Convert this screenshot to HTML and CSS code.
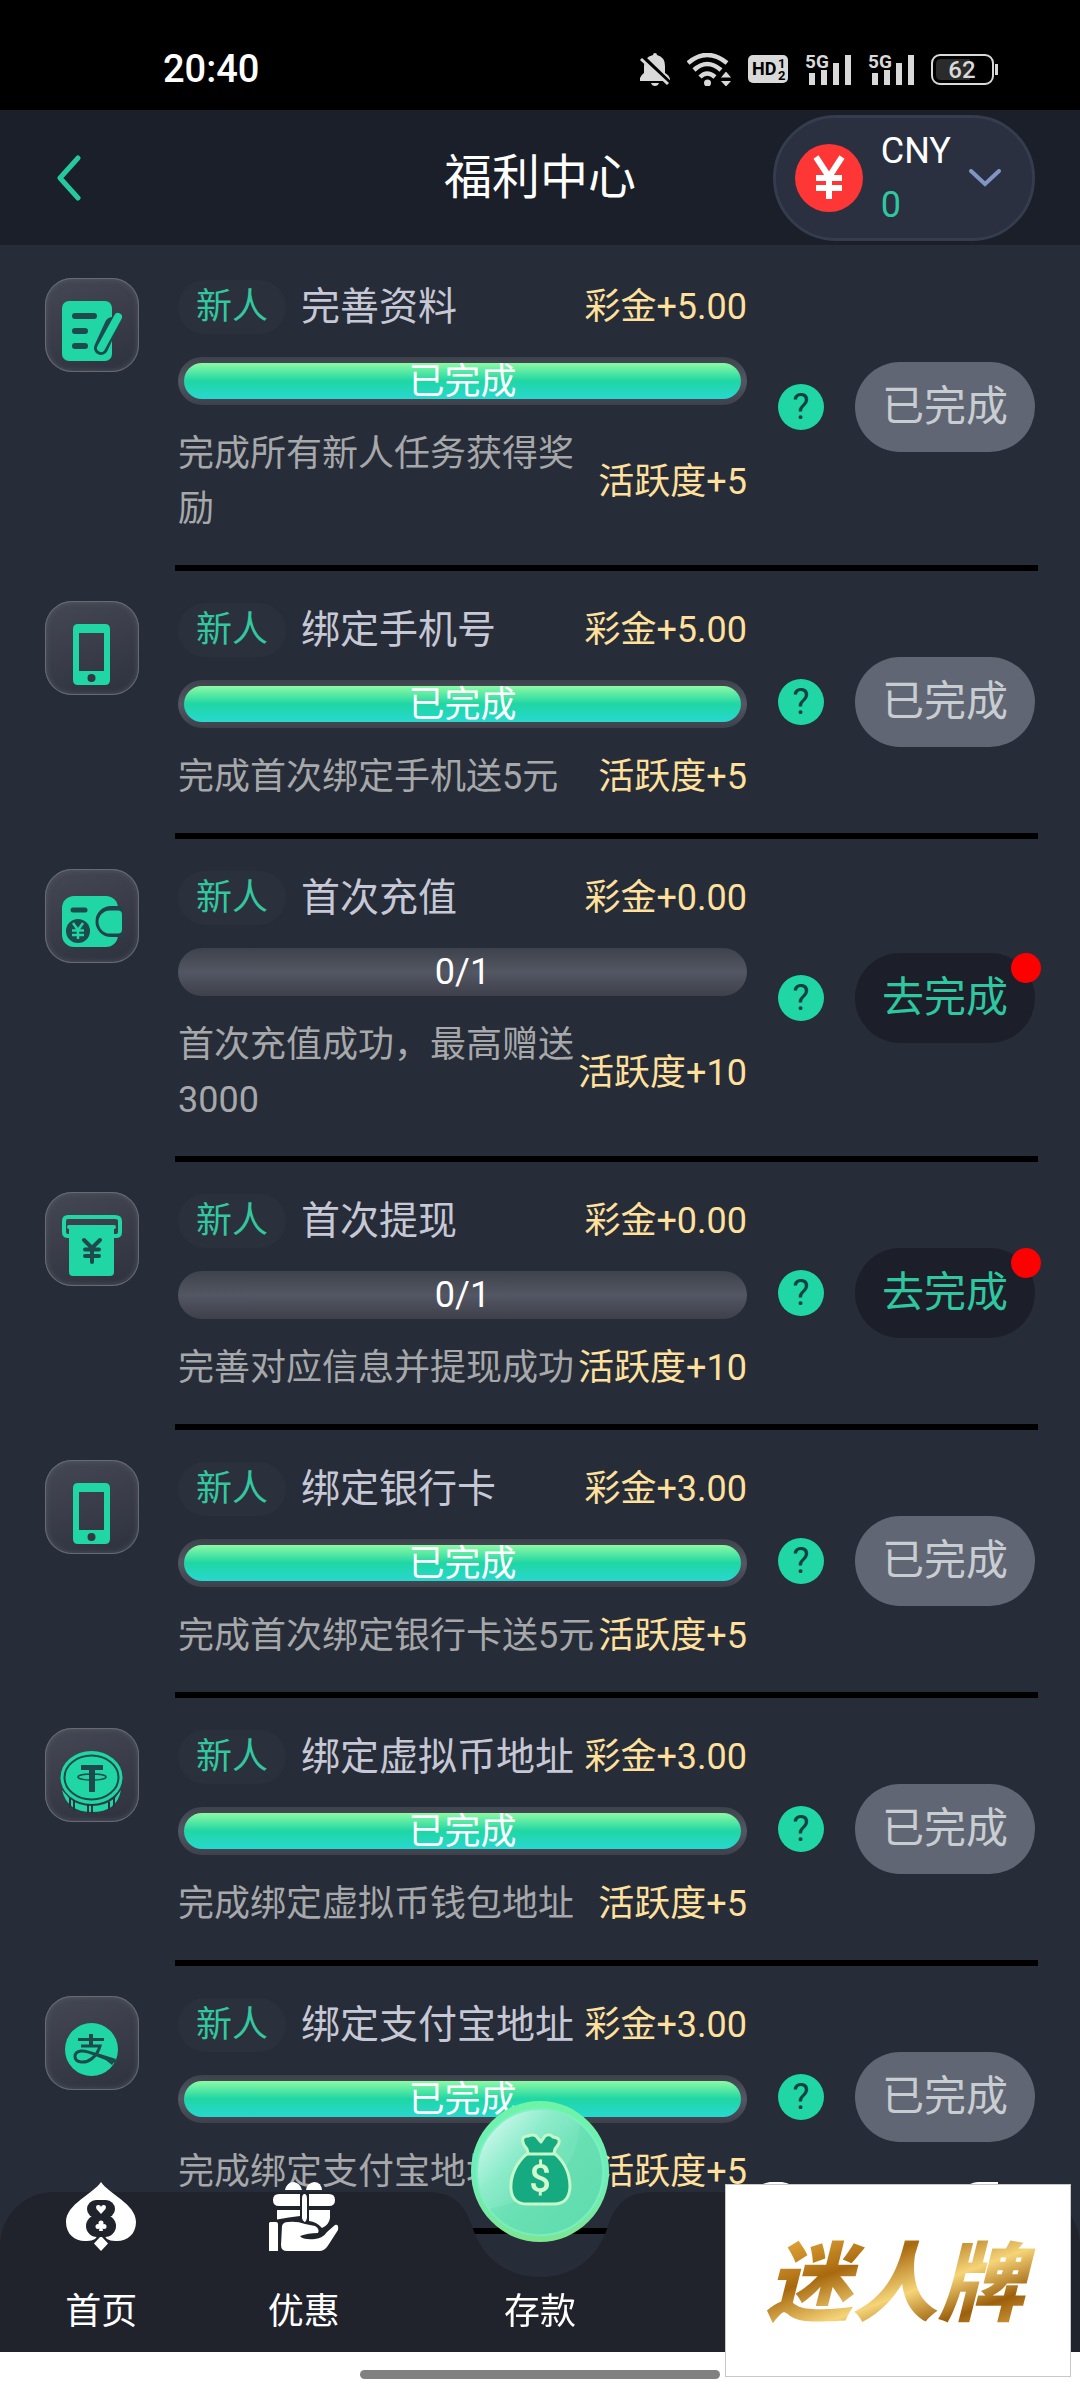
FILE: index.html
```html
<!DOCTYPE html>
<html lang="zh-CN">
<head>
<meta charset="utf-8">
<meta name="viewport" content="width=device-width, initial-scale=1">
<title>福利中心</title>
<link rel="stylesheet" href="styles.css">
</head>
<body>
<svg class="sprite" aria-hidden="true">
  <defs>
    <linearGradient id="coin-rim" x1="0" y1="0" x2="0" y2="1">
      <stop offset="0" stop-color="#6df5a4"/><stop offset="0.5" stop-color="#6eeebb"/><stop offset="1" stop-color="#7ee592"/>
    </linearGradient>
    <linearGradient id="coin-face" x1="0.1" y1="0.1" x2="0.9" y2="0.8">
      <stop offset="0" stop-color="#cdf8ec"/><stop offset="0.3" stop-color="#8eeccb"/><stop offset="0.55" stop-color="#74e3bb"/><stop offset="1" stop-color="#66dfb2"/>
    </linearGradient>
  </defs>
  <symbol id="i-form" viewBox="0 0 94 94">
    <rect x="17" y="23" width="50" height="60" rx="7" fill="#1fd6a4"/>
    <path d="M30 38H49M30 53H40M30 68H40" stroke="#1d4a4c" stroke-width="6" stroke-linecap="round"/>
    <path d="M67 46L56 70" stroke="#1d4a4c" stroke-width="14" stroke-linecap="round"/>
    <path d="M73 39L56 70" stroke="#1fd6a4" stroke-width="8" stroke-linecap="round"/>
  </symbol>
  <symbol id="i-phone" viewBox="0 0 94 94">
    <path fill="#1fd6a4" fill-rule="evenodd" d="M33 23H60Q65 23 65 28V79Q65 84 60 84H33Q28 84 28 79V28Q28 23 33 23ZM34 32V70H59V32ZM46.500 73A4 4 0 1 0 46.500 81A4 4 0 1 0 46.500 73Z"/>
  </symbol>
  <symbol id="i-wallet" viewBox="0 0 94 94">
    <rect x="17" y="27" width="56" height="51" rx="12" fill="#1fd6a4"/>
    <path d="M78 37H66A15 15 0 0 0 66 68H78Z" fill="#23424b"/>
    <path d="M73 41.500H65A11.500 11.500 0 0 0 65 64.500H73Q77 64.500 77 60.500V45.500Q77 41.500 73 41.500Z" fill="#1fd6a4"/>
    <path d="M28 41H40" stroke="#1d4a4c" stroke-width="5" stroke-linecap="round"/>
    <circle cx="33" cy="62" r="12" fill="#1d4a4c"/>
    <path d="M28 54L33 61L38 54M33 61V70M27 61.500H39M27 66H39" fill="none" stroke="#1fd6a4" stroke-width="2.500"/>
  </symbol>
  <symbol id="i-withdraw" viewBox="0 0 94 94">
    <path d="M26 44H23Q19 44 19 40V29Q19 25 23 25H70Q75 25 75 29V40Q75 44 71 44H67" fill="none" stroke="#1fd6a4" stroke-width="4"/>
    <path d="M24 33H69V80Q69 84 65 84H28Q24 84 24 80Z" fill="#1fd6a4"/>
    <path d="M24 35H69" stroke="#1fd6a4" stroke-width="4" stroke-linecap="round"/>
    <path d="M39 48L47 56L55 48M47 56V70M40 57.500H54M40 64H54" fill="none" stroke="#1d4a4c" stroke-width="4" stroke-linecap="round"/>
  </symbol>
  <symbol id="i-tether" viewBox="0 0 94 94">
    <path d="M17 62Q22 84 47 84Q72 84 76 62L70 70Q60 78 47 78Q33 78 24 70Z" fill="#1fd6a4"/>
    <path d="M25 70V80M29 72V83M43 76V86M47 76V86M64 74V82M69 70V79" stroke="#263340" stroke-width="2"/>
    <ellipse cx="46.500" cy="49.500" rx="31" ry="26.500" fill="#1fd6a4"/>
    <ellipse cx="46.500" cy="49.500" rx="27" ry="22" fill="none" stroke="#1d4a4c" stroke-width="2"/>
    <path d="M36 37H58V42H50V64H44V42H36Z" fill="#1d4a4c"/>
    <ellipse cx="47" cy="49" rx="14" ry="3" fill="none" stroke="#1d4a4c" stroke-width="1.500"/>
  </symbol>
  <symbol id="i-alipay" viewBox="0 0 94 94">
    <circle cx="46.500" cy="53.500" r="26.500" fill="#1fd6a4"/>
    <path d="M33 43.500H59M36 50H55C52 61 43 67 36 66C28 65 28 56 36 55C45 54 55 62 72 66" fill="none" stroke="#1d4a4c" stroke-width="3"/>
    <path d="M52 57L71 63L67 69Z" fill="#1d4a4c"/>
    <path d="M44 38H48V50H44Z" fill="#1d4a4c"/>
  </symbol>
</svg>

<header class="top">
  <div class="status">
    <span class="clock">20:40</span>
    <div class="status-icons">
      <svg width="30" height="33" viewBox="0 0 30 33"><path fill="#d9d9d9" d="M15 0Q17 0 17 2Q25 4 25 13V20Q29 22 30 26V28H0V25Q1 22 4 20V13Q4 4 13 2Q13 0 15 0ZM11 30H19Q18 33 15 33Q12 33 11 30Z"/><path d="M3 4L31 31" stroke="#000" stroke-width="4"/><path d="M1 6L28 31" stroke="#d9d9d9" stroke-width="3"/></svg>
      <svg width="44" height="33" viewBox="0 0 44 33"><g fill="none" stroke="#d9d9d9" stroke-width="4.500"><path d="M1 10Q20 -6 40 10"/><path d="M7 17Q20 5 34 17"/><path d="M13 24Q20 17 28 24"/></g><circle cx="20.500" cy="30" r="3.500" fill="#d9d9d9"/><path fill="#d9d9d9" stroke="#000" d="M33 25L39 18L45 25ZM33 27.500H45L39 34Z"/></svg>
      <svg width="40" height="28" viewBox="0 0 40 28"><rect width="40" height="28" rx="5" fill="#d9d9d9"/><text x="4" y="20" font-size="18" font-weight="700">HD</text><text x="30" y="13" font-size="13" font-weight="700">1</text><text x="30" y="25" font-size="13" font-weight="700">2</text></svg>
      <svg width="46" height="33" viewBox="0 0 46 33"><text x="0" y="15" font-size="19" font-weight="700" fill="#d9d9d9">5G</text><path fill="#d9d9d9" d="M4 20H10V32H4ZM16 17H22V32H16ZM28 10H34V32H28ZM40 2H46V32H40Z"/></svg>
      <svg width="46" height="33" viewBox="0 0 46 33"><text x="0" y="15" font-size="19" font-weight="700" fill="#d9d9d9">5G</text><path fill="#d9d9d9" d="M4 20H10V32H4ZM16 17H22V32H16ZM28 10H34V32H28ZM40 2H46V32H40Z"/></svg>
      <svg width="67" height="31" viewBox="0 0 67 31"><rect x="1" y="1" width="61" height="29" rx="8" fill="none" stroke="#d9d9d9" stroke-width="2"/><path d="M10 5H39V26H10Q5 26 5 21V10Q5 5 10 5Z" fill="#2b2b2b"/><path d="M65.500 10V21" stroke="#d9d9d9" stroke-width="3"/><text x="31" y="24" font-size="24" font-weight="500" text-anchor="middle" fill="#d9d9d9">62</text></svg>
    </div>
  </div>
  <div class="titlebar">
    <button class="back" type="button" aria-label="返回"><svg width="24" height="46" viewBox="0 0 24 46"><path d="M21 3L3 23L21 43" fill="none" stroke="#26c99e" stroke-width="5" stroke-linecap="round" stroke-linejoin="round"/></svg></button>
    <h1>福利中心</h1>
    <button class="wallet" type="button">
      <svg width="68" height="68" viewBox="0 0 68 68"><circle cx="34" cy="34" r="34" fill="#ff3636"/><path d="M21 13L34 33L47 13M34 32V55M21 34H47M21 44H47" fill="none" stroke="#fff" stroke-width="6"/></svg>
      <span class="balance"><span>CNY</span><span class="amount">0</span></span>
      <svg width="32" height="18" viewBox="0 0 32 18"><path d="M2 2L16 15L30 2" fill="none" stroke="#8195c4" stroke-width="4" stroke-linecap="round"/></svg>
    </button>
  </div>
</header>

<main>
  <ul class="tasks">
    <li class="task">
      <div class="tile"><svg><use href="#i-form"/></svg></div>
      <div class="body">
        <div class="info">
          <div class="head"><span class="tag">新人</span><h2>完善资料</h2><span class="gold">彩金+5.00</span></div>
          <div class="bar"><div class="fill">已完成</div></div>
          <div class="foot"><p>完成所有新人任务获得奖励</p><span class="gold">活跃度+5</span></div>
        </div>
        <button class="help" type="button">?</button>
        <button class="action" type="button" disabled>已完成</button>
      </div>
    </li>
    <li class="task">
      <div class="tile"><svg><use href="#i-phone"/></svg></div>
      <div class="body">
        <div class="info">
          <div class="head"><span class="tag">新人</span><h2>绑定手机号</h2><span class="gold">彩金+5.00</span></div>
          <div class="bar"><div class="fill">已完成</div></div>
          <div class="foot"><p>完成首次绑定手机送5元</p><span class="gold">活跃度+5</span></div>
        </div>
        <button class="help" type="button">?</button>
        <button class="action" type="button" disabled>已完成</button>
      </div>
    </li>
    <li class="task">
      <div class="tile"><svg><use href="#i-wallet"/></svg></div>
      <div class="body">
        <div class="info">
          <div class="head"><span class="tag">新人</span><h2>首次充值</h2><span class="gold">彩金+0.00</span></div>
          <div class="bar">0/1</div>
          <div class="foot"><p>首次充值成功，最高赠送3000</p><span class="gold">活跃度+10</span></div>
        </div>
        <button class="help" type="button">?</button>
        <button class="action go" type="button">去完成</button>
      </div>
    </li>
    <li class="task">
      <div class="tile"><svg><use href="#i-withdraw"/></svg></div>
      <div class="body">
        <div class="info">
          <div class="head"><span class="tag">新人</span><h2>首次提现</h2><span class="gold">彩金+0.00</span></div>
          <div class="bar">0/1</div>
          <div class="foot"><p>完善对应信息并提现成功</p><span class="gold">活跃度+10</span></div>
        </div>
        <button class="help" type="button">?</button>
        <button class="action go" type="button">去完成</button>
      </div>
    </li>
    <li class="task">
      <div class="tile"><svg><use href="#i-phone"/></svg></div>
      <div class="body">
        <div class="info">
          <div class="head"><span class="tag">新人</span><h2>绑定银行卡</h2><span class="gold">彩金+3.00</span></div>
          <div class="bar"><div class="fill">已完成</div></div>
          <div class="foot"><p>完成首次绑定银行卡送5元</p><span class="gold">活跃度+5</span></div>
        </div>
        <button class="help" type="button">?</button>
        <button class="action" type="button" disabled>已完成</button>
      </div>
    </li>
    <li class="task">
      <div class="tile"><svg><use href="#i-tether"/></svg></div>
      <div class="body">
        <div class="info">
          <div class="head"><span class="tag">新人</span><h2>绑定虚拟币地址</h2><span class="gold">彩金+3.00</span></div>
          <div class="bar"><div class="fill">已完成</div></div>
          <div class="foot"><p>完成绑定虚拟币钱包地址</p><span class="gold">活跃度+5</span></div>
        </div>
        <button class="help" type="button">?</button>
        <button class="action" type="button" disabled>已完成</button>
      </div>
    </li>
    <li class="task">
      <div class="tile"><svg><use href="#i-alipay"/></svg></div>
      <div class="body">
        <div class="info">
          <div class="head"><span class="tag">新人</span><h2>绑定支付宝地址</h2><span class="gold">彩金+3.00</span></div>
          <div class="bar"><div class="fill">已完成</div></div>
          <div class="foot"><p>完成绑定支付宝地址</p><span class="gold">活跃度+5</span></div>
        </div>
        <button class="help" type="button">?</button>
        <button class="action" type="button" disabled>已完成</button>
      </div>
    </li>
  </ul>
</main>

<div class="dock">
  <nav class="nav">
    <div class="nav-shape">
      <span class="shape-left"></span>
      <svg width="240" height="160" viewBox="0 0 240 160"><path fill="#20232c" d="M0 0H8C34 0 46 14 53 37C63 67 88 85 120 85C152 85 177 67 187 37C194 14 206 0 232 0H240V160H0Z"/></svg>
      <span class="shape-right"></span>
    </div>
    <a class="nav-item" href="#home">
      <svg width="70" height="69" viewBox="0 0 70 69"><path fill="#fff" d="M35 0C43 12 70 22 70 40C70 53 60 60 49 59Q44 59 41 57L35 50L29 57Q26 59 21 59C10 60 0 53 0 40C0 22 27 12 35 0Z"/><path fill="#fff" d="M35 54L42 61.500L35 69L28 61.500Z"/><g fill="#20232c"><rect x="21" y="18" width="28" height="18" rx="9"/><rect x="20" y="33" width="30" height="22" rx="11"/></g><path fill="#fff" d="M35 32L30.500 27Q29 23 32.500 23Q34.500 23 35 25Q35.500 23 37.500 23Q41 23 39.500 27Z"/><g fill="#fff"><circle cx="35" cy="41" r="2.500"/><circle cx="32" cy="44.500" r="2.500"/><circle cx="38" cy="44.500" r="2.500"/><path d="M34 43H36L37 49H33Z"/></g></svg>
      <span>首页</span>
    </a>
    <a class="nav-item" href="#offers">
      <svg width="70" height="69" viewBox="0 0 70 69"><g fill="#fff"><path d="M16 8Q18 0 25 0Q31 1 33 8ZM37 8Q38 1 45 0Q52 0 53 8ZM10 12H31V24H10Q4 24 4 18Q4 12 10 12ZM40 12H60Q66 12 66 18Q66 24 60 24H40ZM35.500 12Q38 12 38 17V36Q37 40 35.500 40Q33 38 33 36V17Q33 12 35.500 12ZM8 28H31V34Q20 35 8 37.500ZM40 28H61V36Q60 43 53 46Q48 40 40 39ZM1 40H7Q9 40 9 42V69H0V41Z"/><path d="M13 44Q14 40 19 40Q28 39 36 42L46 44Q51 47 49 51Q39 51 31 54Q34 58 46 57Q54 56 58 50L66 43Q70 42 69 48L60 62Q56 69 51 69H18Q12 69 12 63Z"/></g></svg>
      <span>优惠</span>
    </a>
    <a class="nav-item deposit" href="#deposit">
      <svg width="140" height="141" viewBox="0 0 140 141">
        <ellipse cx="70" cy="70.500" rx="69" ry="70.500" fill="url(#coin-rim)"/>
        <circle cx="70" cy="71" r="63" fill="url(#coin-face)" stroke="#7df0c4" stroke-width="2"/>
        <path d="M110 23Q106 90 19 108A63 63 0 0 0 133 71A63 63 0 0 0 110 23Z" fill="#4fd6a2" opacity="0.250"/>
        <path d="M58 52L57 48C52 43 50 35 58 35Q63 33 66 35L71 41L75 35Q80 32 83 36Q92 37 88 44L85 48L84 52C95 61 100 74 100 86Q99 103 84 103H57Q42 103 41 88C40 76 46 61 58 52Z" fill="#16aa80" stroke="#c5f7ca" stroke-width="3" stroke-linejoin="round"/>
        <path d="M57 53H85" stroke="#c5f7ca" stroke-width="3"/>
        <text x="70" y="91" font-size="38" font-weight="500" text-anchor="middle" fill="#d3f9cf">$</text>
      </svg>
      <span>存款</span>
    </a>
    <a class="nav-item" href="#service" aria-label="客服"><svg width="70" height="69" viewBox="0 0 70 69"><circle cx="35" cy="34" r="32" fill="none" stroke="#fff" stroke-width="5"/></svg><span></span></a>
    <a class="nav-item" href="#mine" aria-label="我的"><svg width="70" height="69" viewBox="0 0 70 69"><path fill="#fff" d="M34 0H54V20H24V6Q26 0 34 0Z"/></svg><span></span></a>
  </nav>
  <div class="gesture"><span></span></div>
  <aside class="brand">迷人牌</aside>
</div>
</body>
</html>
```
FILE: styles.css
```css
* { box-sizing: border-box; }

body {
  margin: 0;
  min-height: 100vh;
  background: #262c38;
  color: #fff;
  font-family: Roboto, "Noto Sans CJK SC", sans-serif;
  font-size: 36px;
  line-height: 54px;
}

button {
  border: 0;
  padding: 0;
  background: none;
  color: inherit;
  font: inherit;
}

svg { display: block; flex: none; }
.sprite { position: absolute; width: 0; height: 0; }

/* Status bar and title bar */
.status {
  display: flex;
  align-items: center;
  justify-content: space-between;
  height: 110px;
  padding: 28px 82px 0 163px;
  background: #000;
}
.clock { font-size: 38px; font-weight: 500; line-height: 56px; }
.status-icons { display: flex; align-items: center; gap: 17px; }

.titlebar {
  display: grid;
  grid-template-columns: 1fr auto 1fr;
  align-items: center;
  height: 135px;
  padding: 0 45px;
  background: #1b1f29;
}
.back {
  display: flex;
  align-items: center;
  justify-content: center;
  width: 48px;
  height: 72px;
}
h1 { margin: 0; font-size: 48px; font-weight: 400; }
.wallet {
  display: flex;
  align-items: center;
  justify-self: end;
  gap: 18px;
  padding: 6px 31px 6px 19px;
  border: 3px solid #343c4d;
  border-radius: 63px;
  background: #2a303f;
}
.balance { display: grid; text-align: left; }
.amount { color: #2fc79f; }

/* Task list */
.tasks {
  margin: 0;
  padding: 3px 42px 160px 45px;
  list-style: none;
}
.task { display: flex; gap: 36px; }
.tile {
  flex: none;
  width: 94px;
  height: 94px;
  margin-top: 30px;
  border-radius: 27px;
  background: linear-gradient(160deg, #444854, #3a3d49 50%, #2c323e);
  box-shadow: inset 0 0 0 1px #666a75, inset 0 0 6px #5a5e69;
}
.tile svg { width: 94px; height: 94px; }
.body {
  display: flex;
  flex: 1;
  align-items: center;
  gap: 31px;
  min-width: 0;
  padding: 0 3px;
  border-bottom: 6px solid #000;
}
.info { flex: 1; min-width: 0; padding: 32px 0 28px; }
.head { display: flex; align-items: center; }
.tag {
  padding: 0 18px;
  margin-right: 15px;
  border-radius: 27px;
  background: #2b313c;
  color: #33c79f;
}
h2 {
  flex: 1;
  margin: 0;
  color: #c6c8d5;
  font-size: 39px;
  font-weight: 400;
  white-space: nowrap;
}
.gold { flex: none; color: #ffe09c; white-space: nowrap; }
.bar {
  height: 48px;
  margin: 23px 0 22px;
  padding: 6px;
  border-radius: 24px;
  background: linear-gradient(#3e424c, #535763 50%, #3e404b);
  line-height: 36px;
  text-align: center;
}
.fill {
  height: 36px;
  border-radius: 18px;
  background: linear-gradient(#8dfaa4, #1fd6a4 50%, #27d8cf);
  line-height: 38px;
}
.foot { display: flex; align-items: center; line-height: 55px; }
.foot p { flex: 1; margin: 0; color: #a6a8aa; }
.help {
  flex: none;
  width: 46px;
  height: 46px;
  border-radius: 50%;
  background: #1fd6a4;
  color: #14403f;
  line-height: 46px;
}
.action {
  position: relative;
  flex: none;
  width: 180px;
  height: 90px;
  border-radius: 45px;
  background: #606673;
  color: #c8cdd1;
  font-size: 42px;
}
.go { background: #1c1f2a; color: #2fc79f; }
.go::after {
  content: "";
  position: absolute;
  top: 0;
  right: -6px;
  width: 30px;
  height: 30px;
  border-radius: 50%;
  background: #f00;
}

/* Bottom navigation */
.dock { position: fixed; right: 0; bottom: 0; left: 0; }
.nav {
  position: relative;
  display: grid;
  grid-template-columns: 3fr 3fr 4fr 3fr 3fr;
  align-items: end;
  padding-bottom: 13px;
}
.nav-shape {
  position: absolute;
  right: 0;
  bottom: 0;
  left: 0;
  display: flex;
  height: 160px;
}
.shape-left, .shape-right { flex: 1; background: #20232c; }
.shape-left { border-top-left-radius: 54px; }
.shape-right { border-top-right-radius: 54px; }
.nav-item {
  position: relative;
  display: flex;
  flex-direction: column;
  align-items: center;
  gap: 34px;
  color: #fff;
  text-decoration: none;
}
.nav-item span { height: 54px; }
.deposit { gap: 43px; }
.gesture {
  display: flex;
  align-items: center;
  justify-content: center;
  height: 48px;
  padding-bottom: 3px;
  background: #fff;
}
.gesture span {
  width: 33.333%;
  height: 9px;
  border-radius: 5px;
  background: #808080;
}
.brand {
  position: absolute;
  right: 9px;
  bottom: 23px;
  display: grid;
  place-content: center;
  width: 346px;
  height: 193px;
  padding: 8px 6px 0 0;
  border: 1px solid #c8c8c8;
  background: linear-gradient(160deg, #8a5208, #e0a437 25%, #a8690f 40%, #f6d478 55%, #9c5f0c 68%, #e6b04a 82%, #8a5208) text, #fff;
  color: transparent;
  font-size: 86px;
  font-style: italic;
  font-weight: 900;
  line-height: 130px;
}
```
